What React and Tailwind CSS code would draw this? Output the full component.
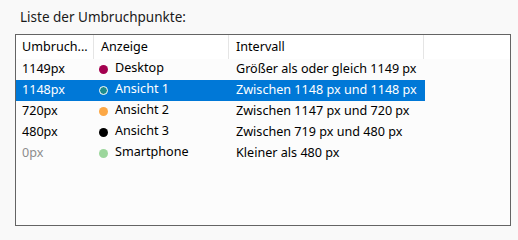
export default function App() {
  const rows = [
    { px: "1149px", color: "#a3004f", name: "Desktop", iv: "Größer als oder gleich 1149 px" },
    { px: "1148px", color: "#1c8c8c", name: "Ansicht 1", iv: "Zwischen 1148 px und 1148 px", sel: true },
    { px: "720px", color: "#fca846", name: "Ansicht 2", iv: "Zwischen 1147 px und 720 px" },
    { px: "480px", color: "#000000", name: "Ansicht 3", iv: "Zwischen 719 px und 480 px" },
    { px: "0px", color: "#9cd69c", name: "Smartphone", iv: "Kleiner als 480 px", dim: true },
  ];
  return (
    <div className="w-[518px] h-[240px] bg-[#f9f9f9] text-black" style={{ fontFamily: '"Noto Sans", sans-serif' }}>
      <div className="pl-[20px] pt-[7px] h-[34px] text-[13.5px] leading-[20px] text-[#1a1a1a]">Liste der Umbruchpunkte:</div>
      <div className="ml-[15px] w-[496px] h-[192px] border border-[#646464] bg-[#fcfcfc] text-[12.6px]">
        <div className="flex h-[24px] bg-white items-center">
          <div className="w-[78px] h-full pl-[6px] flex items-center border-r border-[#e5e5e5]">Umbruch...</div>
          <div className="w-[135px] h-full pl-[7px] flex items-center border-r border-[#e5e5e5]">Anzeige</div>
          <div className="w-[195px] h-full pl-[7px] flex items-center border-r border-[#e5e5e5]">Intervall</div>
        </div>
        {rows.map((r) => (
          <div key={r.px} className={"flex h-[21px] items-center w-[409px] " + (r.sel ? "bg-[#0078d7] text-white" : "")}>
            <div className={"w-[78px] pl-[6px] " + (r.dim ? "text-[#8c8c8c]" : "")}>{r.px}</div>
            <div className="w-[135px] pl-[5px] flex items-center">
              <span
                className={"w-[9px] h-[9px] rounded-full mr-[7px] " + (r.sel ? "border border-white" : "")}
                style={{ backgroundColor: r.color }}
              />
              <span className="-mt-[2px]">{r.name}</span>
            </div>
            <div className="w-[195px] pl-[7px]">{r.iv}</div>
          </div>
        ))}
      </div>
    </div>
  );
}
